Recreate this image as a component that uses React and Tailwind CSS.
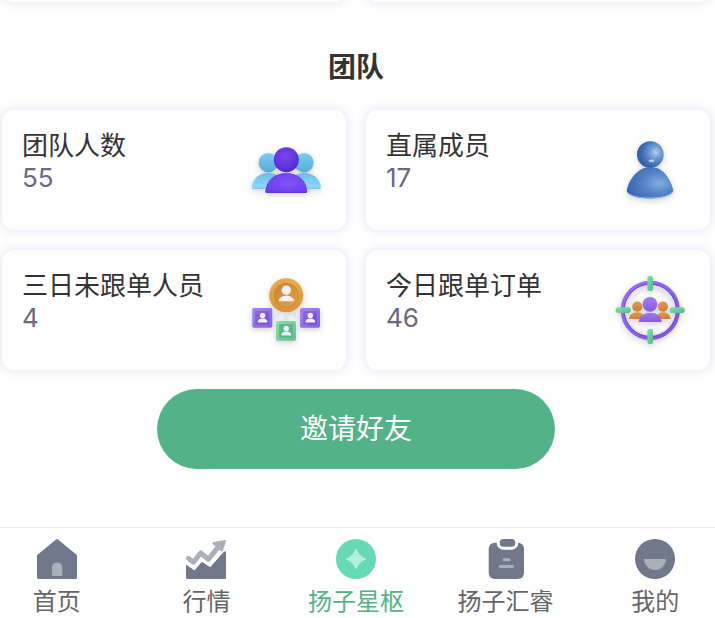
import React from 'react';

function Gradient({ id, from, to, x2 = 0, y2 = 1 }) {
  return (
    <linearGradient id={id} x1="0" y1="0" x2={x2} y2={y2}>
      <stop offset="0" stopColor={from} />
      <stop offset="1" stopColor={to} />
    </linearGradient>
  );
}

function Art({ children }) {
  return (
    <svg viewBox="0 0 80 80" aria-hidden="true" className="size-20 shrink-0 drop-shadow-[0_2px_3px_rgba(60,60,80,0.25)]">
      {children}
    </svg>
  );
}

function TeamArt() {
  return (
    <Art>
      <defs>
        <Gradient id="teamSky" from="#7ccdf2" to="#5aa9d8" />
        <Gradient id="teamSkyBody" from="#6fbce6" to="#8bddfb" />
        <radialGradient id="teamHead" cx="0.45" cy="0.35" r="0.7">
          <stop offset="0" stopColor="#7446ea" />
          <stop offset="0.6" stopColor="#6436de" />
          <stop offset="1" stopColor="#4a1fd0" />
        </radialGradient>
        <radialGradient id="teamBody" cx="0.55" cy="0.5" r="0.6">
          <stop offset="0" stopColor="#7f55f5" />
          <stop offset="1" stopColor="#6c3bea" />
        </radialGradient>
      </defs>
      <circle cx="22.3" cy="32.7" r="9.7" fill="url(#teamSky)" />
      <circle cx="58" cy="32.7" r="9.7" fill="url(#teamSky)" />
      <path d="M5.7 57.5C6.5 49 13 43 22.5 43S39 49 39 58.7H7Q5.7 58.7 5.7 57.5Z" fill="url(#teamSkyBody)" />
      <path d="M75 57.5C74.2 49 67.5 43 58 43S41.5 49 41.5 58.7H73.7Q75 58.7 75 57.5Z" fill="url(#teamSkyBody)" />
      <path d="M6.5 58.4H20M61 58.4H74" stroke="#5fb0d8" strokeWidth="0.6" />
      <circle cx="40.3" cy="29.7" r="12.5" fill="url(#teamHead)" />
      <path d="M19.3 61.5C20 50 29 43 40.3 43S60.6 50 61.3 61.5Q61.3 62.7 60 62.7H20.6Q19.3 62.7 19.3 61.5Z" fill="url(#teamBody)" />
      <path d="M20 62.4H60.6" stroke="#4c22c4" strokeWidth="0.8" />
    </Art>
  );
}

function MemberArt() {
  return (
    <Art>
      <defs>
        <radialGradient id="memberHead" cx="0.7" cy="0.42" r="0.75">
          <stop offset="0" stopColor="#b4d0f2" />
          <stop offset="0.3" stopColor="#6f9bd6" />
          <stop offset="0.65" stopColor="#3f6fb6" />
          <stop offset="1" stopColor="#2d5698" />
        </radialGradient>
        <radialGradient id="memberBody" cx="0.7" cy="0.5" r="0.8">
          <stop offset="0" stopColor="#86aee2" />
          <stop offset="0.4" stopColor="#5685c9" />
          <stop offset="1" stopColor="#335fa6" />
        </radialGradient>
      </defs>
      <path d="M33 38.5C36 37.3 45 37.3 48 38.5C56 42 61 51 63.2 60C64 64 54 68.5 40 68.5S16 64.5 16.8 60C18.5 51 25 42 33 38.5Z" fill="url(#memberBody)" />
      <path d="M17 62C20 66 29 68 40 68S60 66 63 61.5" fill="none" stroke="#8fc0f5" strokeWidth="0.9" />
      <circle cx="40.3" cy="24.5" r="13.3" fill="url(#memberHead)" />
      <ellipse cx="41.5" cy="30.7" rx="3" ry="1.3" fill="#c4e0ff" opacity="0.85" />
    </Art>
  );
}

function Tile({ x, y, outer, inner }) {
  return (
    <g transform={`translate(${x} ${y})`}>
      <rect width="20" height="19.7" rx="1.6" fill={outer} />
      <rect x="3" y="3" width="14" height="13.7" rx="0.6" fill={inner} />
      <circle cx="10.3" cy="7.4" r="2.7" fill="#f1edf9" />
      <path d="M5.5 14.5C5.5 11.500 7.500 10.500 10.300 10.500S15.200 11.500 15.200 14.500Z" fill="#f1edf9" />
    </g>
  );
}

function NetworkArt() {
  return (
    <Art>
      <defs>
        <Gradient id="coinRim" from="#e5ab50" to="#d99437" />
        <Gradient id="coinFace" from="#c98130" to="#e3a54a" x2={1} />
        <Gradient id="tileViolet" from="#a587f3" to="#8560e2" x2={1} />
        <Gradient id="tileVioletIn" from="#8c68de" to="#7650d0" x2={1} />
        <Gradient id="tileGreen" from="#86dfae" to="#62c18e" x2={1} />
      </defs>
      <path d="M26 47.5H28Q32 47.5 32.5 41M54 47.5H52.5Q48.5 47.5 48 41M40 41V52" fill="none" stroke="#e2dff0" strokeWidth="2.2" />
      <circle cx="40.2" cy="25.3" r="17" fill="url(#coinRim)" />
      <circle cx="40.2" cy="25.3" r="12" fill="url(#coinFace)" stroke="#c58231" strokeWidth="0.8" />
      <circle cx="40.3" cy="20.3" r="4.7" fill="#f3eff5" />
      <path d="M32.7 31.3C33 27.5 36 25.7 40.3 25.7S47.7 27.5 48 31.3Z" fill="#f3eff5" />
      <Tile x={6.3} y={38} outer="url(#tileViolet)" inner="url(#tileVioletIn)" />
      <Tile x={54} y={38} outer="url(#tileViolet)" inner="url(#tileVioletIn)" />
      <Tile x={30} y={51} outer="url(#tileGreen)" inner="#5fb98a" />
    </Art>
  );
}

function TargetArt() {
  return (
    <Art>
      <defs>
        <Gradient id="ring" from="#9672ec" to="#7c54df" x2={1} />
        <Gradient id="ringBar" from="#86deb1" to="#55b987" x2={1} />
        <Gradient id="orangeMan" from="#df9a49" to="#cf8137" />
        <Gradient id="violetMan" from="#a27cec" to="#885bdf" />
      </defs>
      <circle cx="40.3" cy="40.5" r="24.8" fill="none" stroke="#e2dfea" strokeWidth="1.3" />
      <circle cx="40.3" cy="40.3" r="27.6" fill="none" stroke="url(#ring)" strokeWidth="4" />
      <circle cx="40.3" cy="40.3" r="26.2" fill="none" stroke="#6a3fd2" strokeWidth="0.8" />
      <rect x="37.3" y="6" width="5.7" height="15" rx="2.3" fill="url(#ringBar)" />
      <rect x="37.3" y="59" width="5.7" height="15" rx="2.3" fill="url(#ringBar)" />
      <rect x="5.7" y="37.3" width="15" height="5.7" rx="2.5" fill="url(#ringBar)" />
      <rect x="59.7" y="37.3" width="15" height="5.7" rx="2.5" fill="url(#ringBar)" />
      <circle cx="27.3" cy="36.7" r="5.1" fill="url(#orangeMan)" />
      <circle cx="53" cy="36.7" r="5.1" fill="url(#orangeMan)" />
      <path d="M19 49C19.5 44.5 23 42.3 27.3 42.3S34 44.5 34 49Z" fill="url(#orangeMan)" />
      <path d="M46.5 49C46.5 44.5 49 42.3 53 42.3S60.2 44.5 60.7 49Z" fill="url(#orangeMan)" />
      <circle cx="40" cy="34.3" r="7.4" fill="url(#violetMan)" />
      <path d="M28.7 52C29.5 45.5 34 42.7 40.2 42.7S51 45.5 51.7 52Z" fill="url(#violetMan)" />
    </Art>
  );
}

function NavIcon({ children }) {
  return (
    <svg viewBox="0 0 40 40" aria-hidden="true" className="size-10">
      {children}
    </svg>
  );
}

const homeIcon = (
  <NavIcon>
    <path d="M19 .5Q20-.4 21 .5L39.5 15.8Q40 16.3 40 17V38.5Q40 40 38.5 40H1.5Q0 40 0 38.5V17Q0 16.3.5 15.8Z" fill="#71788a" />
    <path d="M15 37V28A5.2 5.2 0 0 1 25.3 28V37Z" fill="#aab0b8" />
  </NavIcon>
);

const marketIcon = (
  <NavIcon>
    <path d="M0 25.5L8.5 31.5L15.8 22.8L24.2 28.2L37.8 12.8Q40 11.5 40 13.5V38.5Q40 40 38.5 40H1.5Q0 40 0 38.5Z" fill="#71788a" />
    <path d="M2.500 19.500L7.500 23.300L14.700 14L22.500 20.300L33 7" fill="none" stroke="#aab0b8" strokeWidth="5" strokeLinecap="round" strokeLinejoin="round" />
    <path d="M39 1L27.500 3Q25.500 3.800 27 5.200L35.200 12.300Q36.500 13 37 11.500L40 2Q40 .8 39 1Z" fill="#aab0b8" />
  </NavIcon>
);

const starIcon = (
  <NavIcon>
    <circle cx="20" cy="20" r="20" fill="#67dab5" />
    <path d="M20 9.3Q22.900 17.100 30.700 20Q22.900 22.900 20 30.700Q17.100 22.900 9.300 20Q17.100 17.100 20 9.300Z" fill="#b3efdd" />
  </NavIcon>
);

const clipboardIcon = (
  <NavIcon>
    <rect x="2.7" y="3.7" width="35.3" height="36.3" rx="6" fill="#71788a" />
    <rect x="12.2" y="-1.5" width="18.6" height="10.7" rx="5.3" fill="#71788a" stroke="#fff" strokeWidth="3" />
    <rect x="16.7" y="19.3" width="7.6" height="3" rx="1.2" fill="#aab0b8" />
    <rect x="12.7" y="26" width="15.3" height="3" rx="1.2" fill="#aab0b8" />
  </NavIcon>
);

const profileIcon = (
  <NavIcon>
    <circle cx="20" cy="20" r="20" fill="#71788a" />
    <path d="M9 20H31A11 11 0 0 1 9 20Z" fill="#aab0b8" />
  </NavIcon>
);

const stats = [
  { label: '团队人数', value: 55, art: <TeamArt /> },
  { label: '直属成员', value: 17, art: <MemberArt /> },
  { label: '三日未跟单人员', value: 4, art: <NetworkArt /> },
  { label: '今日跟单订单', value: 46, art: <TargetArt /> },
];

const tabs = [
  { label: '首页', icon: homeIcon },
  { label: '行情', icon: marketIcon },
  { label: '扬子星枢', icon: starIcon, active: true },
  { label: '扬子汇睿', icon: clipboardIcon },
  { label: '我的', icon: profileIcon },
];

const cardStyle = 'rounded-xl bg-white shadow-[0_0_10px_1px_rgba(85,65,200,0.14)]';

export default function App() {
  return (
    <div className="overflow-hidden bg-white font-['Inter','Noto_Sans_CJK_SC',sans-serif] text-[#333]">
      <main className="pr-[5px] pl-[2px]">
        <div className="-mt-[118px] grid grid-cols-2 gap-5">
          <div className={`h-[120px] ${cardStyle}`} />
          <div className={`h-[120px] ${cardStyle}`} />
        </div>

        <h2 className="pt-[45px] pb-[23px] text-center text-[28px] leading-10 font-bold">团队</h2>

        <section className="grid grid-cols-2 gap-5">
          {stats.map((s) => (
            <article key={s.label} className={`flex justify-between p-5 ${cardStyle}`}>
              <div className="text-[26px] leading-8">
                <h3>{s.label}</h3>
                <p className="text-[#6b6882]">{s.value}</p>
              </div>
              {s.art}
            </article>
          ))}
        </section>

        <div className="mt-[19px] flex justify-center">
          <button type="button" className="h-20 w-[398px] rounded-full bg-[#54b289] text-[28px] text-white">
            邀请好友
          </button>
        </div>
      </main>

      <nav className="mt-[58px] border-t border-[#ebebeb]">
        <ul className="-mr-[15px] -ml-[18px] grid grid-cols-5 pt-[11px]">
          {tabs.map((t) => (
            <li key={t.label}>
              <a
                href="#"
                aria-current={t.active ? 'page' : undefined}
                className={`flex flex-col items-center gap-[5px] text-2xl leading-9 ${t.active ? 'text-[#54b289]' : 'text-[#646566]'}`}
              >
                {t.icon}
                <span>{t.label}</span>
              </a>
            </li>
          ))}
        </ul>
      </nav>
    </div>
  );
}
